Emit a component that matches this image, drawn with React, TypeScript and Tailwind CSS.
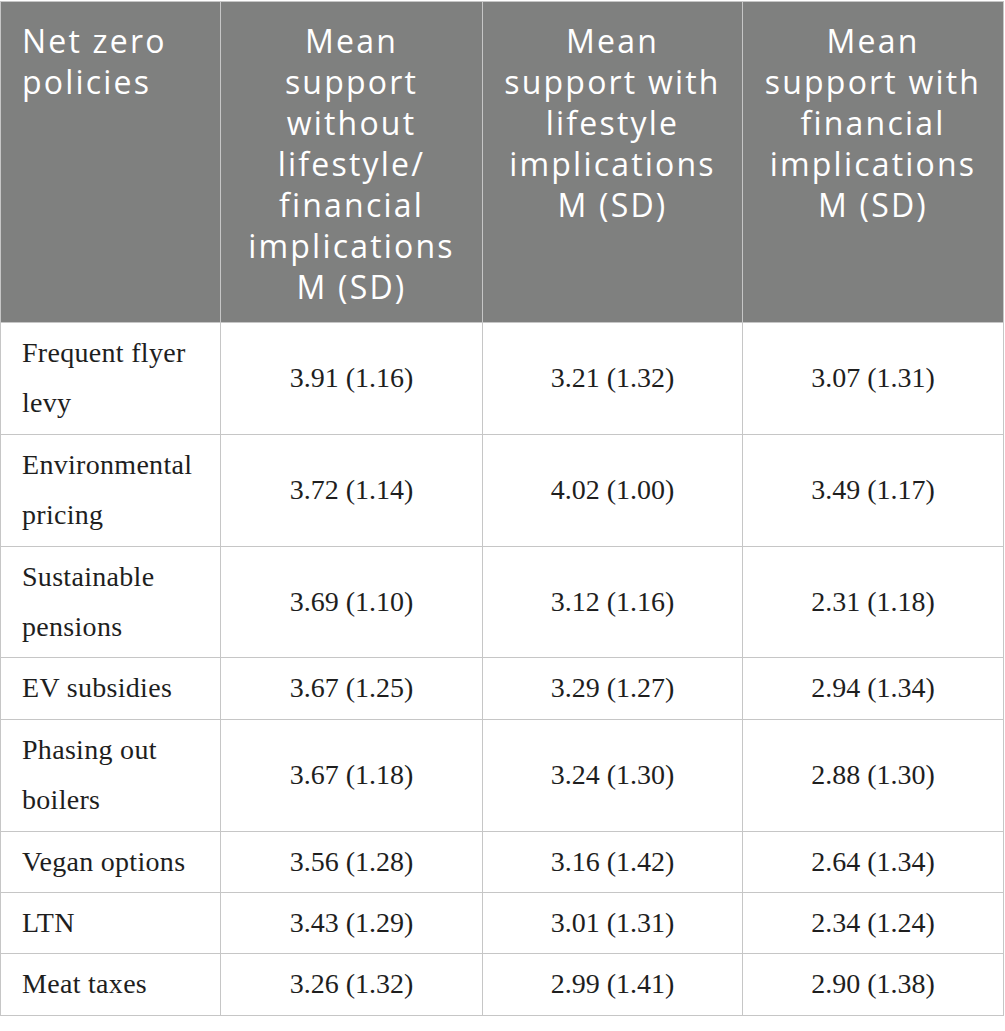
const headers: string[][] = [
  ['Net zero', 'policies'],
  ['Mean', 'support', 'without', 'lifestyle/', 'financial', 'implications', 'M (SD)'],
  ['Mean', 'support with', 'lifestyle', 'implications', 'M (SD)'],
  ['Mean', 'support with', 'financial', 'implications', 'M (SD)'],
]

const rows: { policy: string[]; values: string[] }[] = [
  { policy: ['Frequent flyer', 'levy'], values: ['3.91 (1.16)', '3.21 (1.32)', '3.07 (1.31)'] },
  { policy: ['Environmental', 'pricing'], values: ['3.72 (1.14)', '4.02 (1.00)', '3.49 (1.17)'] },
  { policy: ['Sustainable', 'pensions'], values: ['3.69 (1.10)', '3.12 (1.16)', '2.31 (1.18)'] },
  { policy: ['EV subsidies'], values: ['3.67 (1.25)', '3.29 (1.27)', '2.94 (1.34)'] },
  { policy: ['Phasing out', 'boilers'], values: ['3.67 (1.18)', '3.24 (1.30)', '2.88 (1.30)'] },
  { policy: ['Vegan options'], values: ['3.56 (1.28)', '3.16 (1.42)', '2.64 (1.34)'] },
  { policy: ['LTN'], values: ['3.43 (1.29)', '3.01 (1.31)', '2.34 (1.24)'] },
  { policy: ['Meat taxes'], values: ['3.26 (1.32)', '2.99 (1.41)', '2.90 (1.38)'] },
]

const App = (): React.ReactElement => {
  return (
    <div className="w-[1005px] bg-white pt-px">
      <table className="table-fixed border-collapse w-[1003px]">
        <colgroup>
          <col className="w-[220px]" />
          <col className="w-[262px]" />
          <col className="w-[260px]" />
          <col className="w-[261px]" />
        </colgroup>
        <thead>
          <tr className="bg-[#7f807f]">
            {headers.map((lines, i) => (
              <th
                key={i}
                className={`border border-[#c6c6c6] align-top pt-[18px] pb-[15px] font-normal text-white text-[32px] leading-[41px] tracking-[2.2px] font-['Open_Sans',sans-serif] ${i === 0 ? 'text-left pl-[21px] pr-2' : 'text-center px-2'}`}
              >
                {lines.map((line, j) => (
                  <div key={j} className="whitespace-nowrap">
                    {line}
                  </div>
                ))}
              </th>
            ))}
          </tr>
        </thead>
        <tbody className="font-['Liberation_Serif',serif] text-[28px] leading-[50.4px] text-[#1e1e1e]">
          {rows.map((row, i) => (
            <tr key={i}>
              <td className="border border-[#c6c6c6] align-middle py-[5px] pl-[21px] pr-2 tracking-[0.3px]">
                {row.policy.map((line, j) => (
                  <div key={j} className="whitespace-nowrap">
                    {line}
                  </div>
                ))}
              </td>
              {row.values.map((v, j) => (
                <td
                  key={j}
                  className="border border-[#c6c6c6] align-middle text-center py-[5px] px-2 whitespace-nowrap"
                >
                  {v}
                </td>
              ))}
            </tr>
          ))}
        </tbody>
      </table>
    </div>
  );
};

export default App;
